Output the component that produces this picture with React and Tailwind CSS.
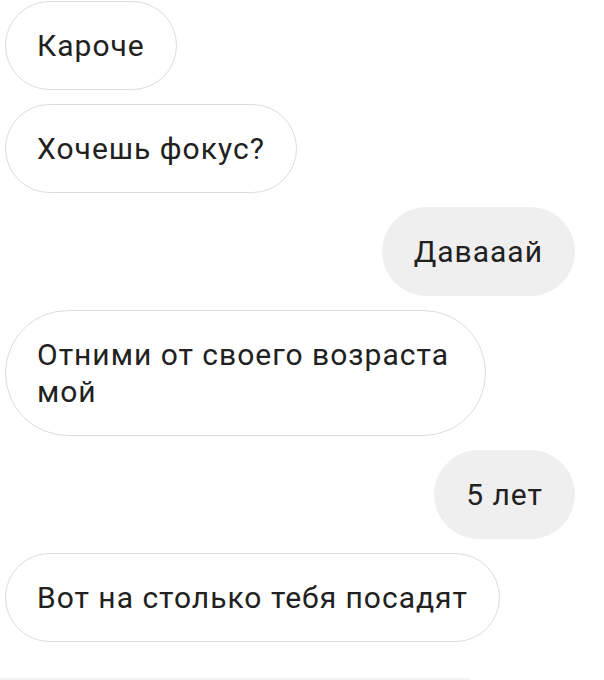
export default function App() {
  const base =
    "rounded-full text-[30px] tracking-[1px] leading-[37px] py-[25px] px-[31px] text-[#212121]";
  const inc = base + " border-[1.5px] border-[#dcdcdc] bg-white";
  const out = base + " bg-[#efefef] border-[1.5px] border-[#efefef]";
  return (
    <div
      className="w-[604px] h-[680px] bg-white flex flex-col overflow-hidden"
      style={{ fontFamily: "Roboto, 'Noto Sans', sans-serif" }}
    >
      <div className="flex flex-col gap-[14px] pt-[1px] pl-[5px] pr-[29px] flex-1">
        <div className="self-start">
          <div className={inc}>Кароче</div>
        </div>
        <div className="self-start">
          <div className={inc}>Хочешь фокус?</div>
        </div>
        <div className="self-end">
          <div className={out}>Давааай</div>
        </div>
        <div className="self-start">
          <div className={inc + " w-[481px] rounded-[44px]"}>
            Отними от своего возраста
            <br />
            мой
          </div>
        </div>
        <div className="self-end">
          <div className={out}>5 лет</div>
        </div>
        <div className="self-start">
          <div className={inc}>Вот на столько тебя посадят</div>
        </div>
      </div>
      <div className="h-[2px] w-[470px] bg-[#f3f3f3]" />
    </div>
  );
}
